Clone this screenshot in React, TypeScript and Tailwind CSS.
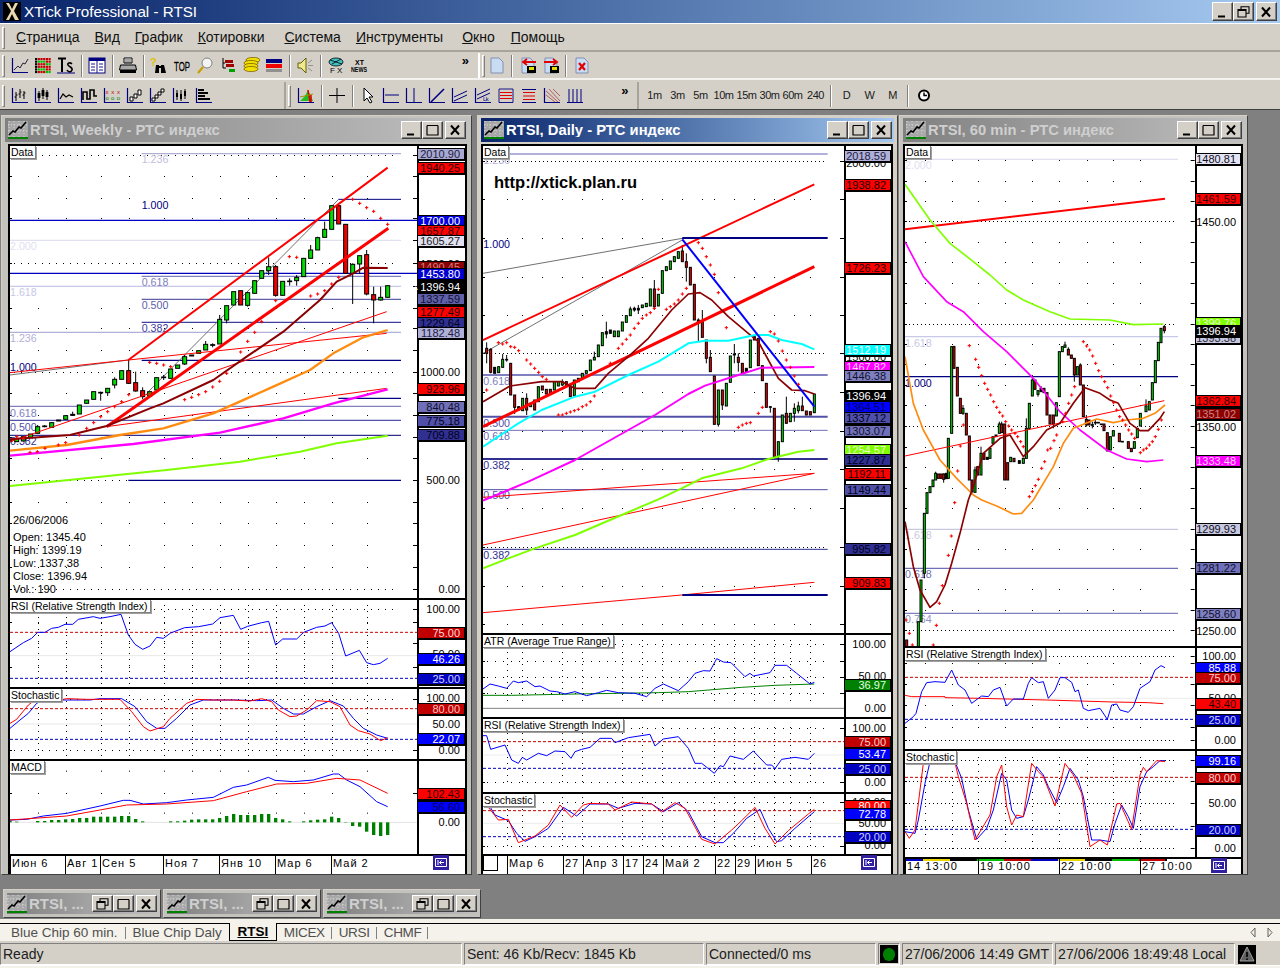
import React from "react";

type C = [number, number, number, string, number?, number?];
type T = [number, string, string?, string?];

const pts = (a: number[]) => {
  let s = "";
  for (let i = 0; i < a.length; i += 2) s += `${a[i]},${a[i + 1]} `;
  return s;
};
function L({ p, c, w = 3, d }: { p: number[]; c: string; w?: number; d?: string }) {
  return <polyline points={pts(p)} fill="none" stroke={c} strokeWidth={w} strokeDasharray={d} strokeLinejoin="round" />;
}
const COL: Record<string, string> = { g: "#00dc00", r: "#f00000", k: "#000000" };
function Candles({ d, w }: { d: C[]; w: number }) {
  return (
    <g>
      {d.map(([x, t, b, c, wt, wb], i) => (
        <g key={i}>
          <line x1={x} x2={x} y1={wt ?? t} y2={wb ?? b} stroke="#000" strokeWidth={3} />
          <rect x={x - w / 2} y={t} width={w} height={Math.max(b - t, 1)} fill={COL[c]} stroke="#000" strokeWidth={3} />
        </g>
      ))}
    </g>
  );
}
function Sar({ p }: { p: number[] }) {
  let s = "";
  for (let i = 0; i < p.length; i += 2) s += `M${p[i] - 5} ${p[i + 1]}h10M${p[i]} ${p[i + 1] - 5}v10`;
  return <path d={s} stroke="#ff0000" strokeWidth={3} fill="none" />;
}
const r3 = (v: number) => Math.round(v / 3) * 3;
function Grid({ xs, ys, dense = [], step = 21, x0, x1, colStep, y0, y1 }: { xs: number[]; ys: number[]; dense?: number[]; step?: number; x0: number; x1: number; colStep?: number; y0?: number; y1?: number }) {
  const out: React.ReactNode[] = [];
  const dot = (x: number, y: number, k: string) => <rect key={k} x={r3(x)} y={r3(y)} width={3} height={3} fill="#000" />;
  ys.forEach((y) => xs.forEach((x) => out.push(dot(x, y, `a${x}-${y}`))));
  dense.forEach((y) => {
    for (let x = x0 + 12; x < x1 - 60; x += step) out.push(dot(x, y, `b${x}-${y}`));
  });
  if (colStep && y0 !== undefined && y1 !== undefined)
    xs.forEach((x) => {
      for (let y = y0; y < y1; y += colStep) out.push(dot(x, y, `c${x}-${y}`));
    });
  [...ys, ...dense].forEach((y, i) => {
    out.push(<rect key={`t${i}`} x={x0} y={r3(y)} width={6} height={3} fill="#000" />);
    out.push(<rect key={`u${i}`} x={x1 - 12} y={r3(y)} width={12} height={3} fill="#000" />);
  });
  return <g>{out}</g>;
}
function Fib({ x, y, t, c }: { x: number; y: number; t: string; c: string }) {
  return (
    <text x={x} y={y} fill={c} fontSize={32}>
      {t}
    </text>
  );
}
function Pane({ cls, plotW, top, vx, vy, vw, vh, tags, over, children }: { cls: string; plotW: string; top: number; vx: number; vy: number; vw: number; vh: number; tags: T[]; over?: React.ReactNode; children: React.ReactNode }) {
  return (
    <div className={`flex shrink-0 box-content border-b-2 border-black ${cls}`}>
      <div className={`relative overflow-hidden shrink-0 ${plotW}`}>
        <svg viewBox={`${vx} ${vy} ${vw} ${vh}`} preserveAspectRatio="none" className="block w-full h-full">
          {children}
        </svg>
        {over}
      </div>
      <div className="relative flex-1 border-l-2 border-black">
        {tags.map(([y, t, bg, fg], i) =>
          bg ? (
            <div key={i} className="absolute left-[-2px] right-0 h-[13px] border border-black border-b-2 box-border flex items-center justify-end pr-[4px] text-[11px] leading-none" style={{ top: y - top - 6, background: bg, color: fg }}>
              {t[0] === "▲" ? <span className="text-[7px] mr-[1px]">▲</span> : null}
              {t[0] === "▲" ? t.slice(1) : t}
            </div>
          ) : (
            <div key={i} className="absolute right-[5px] h-[13px] flex items-center text-[11px] leading-none text-black" style={{ top: y - top - 6 }}>
              {t}
            </div>
          )
        )}
      </div>
    </div>
  );
}
function PaneTitle({ t }: { t: string }) {
  return <div className="absolute left-0 top-0 bg-white text-black text-[10.5px] leading-[12px] pl-[1px] pr-[2px] border border-t-0 border-l-0 border-[#808080] shadow-[1px_1px_0_#a0a0a0] whitespace-nowrap">{t}</div>;
}
function DateRow({ w, items, strip, blank, btn }: { w: string; items: [number, string][]; strip?: boolean; blank?: boolean; btn: string }) {
  return (
    <div className="flex flex-1 bg-white min-h-0">
      <div className={`relative shrink-0 overflow-hidden ${w} text-[11px] text-black tracking-[1px]`}>
        {strip && (
          <div className="flex h-[2px] w-[262px] bg-black">
            <div className="w-[18px] bg-[#0000c0]" />
            <div className="w-[27px] bg-[#e8d800]" />
            <div className="w-[27px] bg-black" />
            <div className="w-[27px] bg-[#00c000]" />
            <div className="w-[27px] bg-[#c00000]" />
            <div className="w-[27px] bg-[#0000c0]" />
            <div className="w-[27px] bg-[#e8d800]" />
            <div className="w-[27px] bg-black" />
            <div className="w-[27px] bg-[#00c000]" />
            <div className="w-[26px] bg-[#c00000]" />
          </div>
        )}
        {blank && <div className="absolute left-0 top-[-3px] w-[15px] h-[18px] border border-black bg-white" />}
        {items.map(([x, t], i) => (
          <div key={i} className="absolute top-0 bottom-0 border-l border-black pl-[1px] leading-[14px] whitespace-nowrap" style={{ left: x }}>
            {t}
          </div>
        ))}
      </div>
      <div className="flex-1 relative">
        <div className={`absolute top-[-1px] ${btn} w-[16px] h-[15px] bg-[#3020a0] flex items-center justify-center`}>
          <svg width="12" height="9" viewBox="0 0 12 9" fill="none" stroke="#fff">
            <path d="M.5.5h11v8H.5zM3 2v5M9 4.5H4.5M6.5 2.5l-2 2 2 2" />
          </svg>
        </div>
      </div>
    </div>
  );
}

function TitleIcon() {
  return (
    <svg width="20" height="18" viewBox="0 0 20 18" className="shrink-0">
      <rect width="20" height="18" fill="#a8a8a8" />
      <path d="M1 0v16M6 0v16M11 0v16M16 0v16M0 4h20M0 10h20" stroke="#d8d8d8" strokeWidth="1" strokeDasharray="1 2" />
      <path d="M1 14l4-4 2 1 4-5 2 1 5-6" stroke="#000" strokeWidth="1.6" fill="none" />
      <rect y="16" width="20" height="2" fill="#008000" />
    </svg>
  );
}
function WinBtn({ g, w = "w-[21px]", h = "h-[18px]" }: { g: "min" | "max" | "rest" | "close"; w?: string; h?: string }) {
  return (
    <div className={`${w} ${h} shrink-0 bg-[#d4d0c8] border border-[#404040] border-t-white border-l-white shadow-[inset_-1px_-1px_0_#808080] flex items-center justify-center`}>
      <svg width="13" height="12" viewBox="0 0 13 12" fill="none" stroke="#000">
        {g === "min" && <path d="M2 10.5h7" strokeWidth="2" />}
        {g === "max" && <path d="M1 1.5h11M1 1.5v9.5h11V1.5" strokeWidth="1.2" />}
        {g === "rest" && <path d="M4 3V.7h8v6.5h-3M1 3.5h8V11H1zM1 4.5h8" strokeWidth="1.1" />}
        {g === "close" && <path d="M2 1.5l8 9M10 1.5l-8 9" strokeWidth="2" />}
      </svg>
    </div>
  );
}
function MdiWin({ cls, frame, active, title, children }: { cls: string; frame: string; active?: boolean; title: string; children: React.ReactNode }) {
  return (
    <div className={`absolute flex flex-col border border-[#404040] border-t-[#d4d0c8] border-l-[#d4d0c8] px-[3px] pt-[2px] ${active ? "bg-[#d4d0c8]" : "bg-[#c4c2bc]"} ${cls}`}>
      <div className={`h-[24px] shrink-0 flex items-center pl-[3px] pr-[2px] ${active ? "bg-linear-to-r from-[#0a246a] to-[#a6caf0] text-white" : "bg-linear-to-r from-[#808080] to-[#c0c0c0] text-[#cfcfcf]"}`}>
        <TitleIcon />
        <div className="ml-[2px] flex-1 text-[14.75px] font-bold leading-none whitespace-nowrap overflow-hidden">{title}</div>
        <WinBtn g="min" />
        <WinBtn g="max" />
        <div className="w-[2px]" />
        <WinBtn g="close" />
      </div>
      <div className={`mt-[2px] flex-1 min-h-0 flex flex-col bg-white border-t-2 border-x-2 border-black ${frame}`}>{children}</div>
    </div>
  );
}
function Tile({ cls }: { cls: string }) {
  return (
    <div className={`absolute top-[779px] w-[158px] h-[29px] bg-[#c4c2bc] border border-[#404040] border-t-[#d4d0c8] border-l-[#d4d0c8] p-[3px] ${cls}`}>
      <div className="h-full flex items-center bg-linear-to-r from-[#808080] to-[#c0c0c0] text-[#cfcfcf]">
        <TitleIcon />
        <div className="ml-[2px] flex-1 text-[15px] font-bold leading-none whitespace-nowrap overflow-hidden">RTSI, ...</div>
        <WinBtn g="rest" h="h-[17px]" />
        <WinBtn g="max" h="h-[17px]" />
        <div className="w-[2px]" />
        <WinBtn g="close" h="h-[17px]" />
      </div>
    </div>
  );
}

/* ---------- Weekly ---------- */
const wkCandles: C[] = [
  [30, 900, 905, "r"], [50, 895, 905, "g"], [70, 890, 903, "g"], [92, 882, 892, "g"], [113, 860, 880, "g", 855, 880], [134, 858, 860, "k", 855, 862], [155, 848, 862, "g"], [176, 840, 843, "k"], [197, 827, 838, "g"], [218, 823, 826, "k", 815, 828], [238, 795, 822, "g"], [260, 780, 790, "g"], [281, 755, 778, "g", 755, 780], [302, 757, 759, "k", 755, 782], [323, 745, 758, "g", 745, 768], [344, 718, 735, "g", 712, 745], [365, 692, 718, "g"], [386, 692, 730, "r", 660, 732], [407, 728, 753, "r", 695, 755], [428, 752, 770, "r", 742, 778], [449, 755, 768, "g"], [470, 713, 750, "g"], [491, 711, 713, "k", 705, 720], [512, 687, 715, "g"], [533, 675, 685, "g"], [554, 650, 672, "g", 645, 675], [575, 645, 648, "g"], [596, 632, 640, "g"], [617, 613, 630, "g", 603, 630], [638, 614, 616, "k", 610, 622], [659, 538, 612, "g", 525, 612], [680, 497, 540, "g", 497, 550], [701, 455, 495, "g"], [722, 452, 495, "r"], [743, 458, 496, "g", 455, 500], [764, 422, 460, "g"], [785, 392, 415, "g"], [806, 380, 392, "g", 352, 405], [827, 380, 466, "r", 375, 470], [848, 424, 466, "g"], [869, 423, 425, "k", 415, 437], [890, 412, 422, "g", 405, 437], [911, 355, 410, "g"], [932, 330, 355, "g", 315, 355], [953, 293, 330, "g", 290, 330], [974, 268, 292, "g", 245, 292], [995, 197, 268, "g"], [1016, 197, 252, "r"], [1037, 253, 400, "r"], [1058, 373, 400, "g", 370, 492], [1079, 347, 372, "g", 347, 402], [1100, 344, 462, "r", 330, 466], [1121, 464, 480, "r", 440, 550], [1142, 472, 480, "g", 440, 482], [1163, 437, 472, "g"],
];
const wkXs = [113, 197, 302, 386, 491, 575, 659, 743, 827, 911, 995, 1100];
const wkSar = [50, 890, 70, 895, 90, 937, 112, 935, 135, 925, 175, 915, 197, 908, 238, 885, 260, 865, 281, 848, 302, 830, 323, 815, 344, 800, 365, 785, 386, 764, 449, 667, 470, 670, 491, 675, 512, 680, 554, 779, 575, 772, 596, 764, 617, 755, 638, 741, 659, 724, 680, 700, 722, 636, 743, 604, 764, 577, 785, 545, 827, 482, 868, 350, 890, 352, 932, 468, 953, 462, 974, 452, 995, 432, 1016, 412, 1058, 178, 1079, 190, 1100, 203, 1121, 214, 1142, 235, 1163, 253];

function Weekly() {
  const main: T[] = [
    [372, "1000.00"], [480, "500.00"], [589, "0.00"], [264, "1500.00"],
    [154, "2010.90", "#a8a8d0", "#202040"], [168, "1940.25", "#ff0000", "#200000"], [221, "1700.00", "#0000e0", "#ffffff"], [231, "1657.87", "#ff0000", "#300000"], [241, "1605.27", "#e0e0f0", "#202020"], [267, "1490.45", "#8b0000", "#d08080"], [274, "1453.80", "#0000d0", "#ffffff"], [287, "▲1396.94", "#000000", "#ffffff"], [299, "1337.59", "#6060a8", "#101030"], [312, "1277.49", "#ff0000", "#200000"], [323, "1229.64", "#303090", "#000020"], [333, "1182.48", "#b0b0d8", "#202040"], [389, "923.96", "#ff0000", "#200000"], [407, "840.48", "#7070b8", "#101030"], [421, "775.18", "#5050a8", "#000020"], [435, "709.88", "#303090", "#000020"],
  ];
  return (
    <MdiWin cls="left-[1px] top-[5px] w-[471px] h-[760px]" frame="ml-[3px] mr-[1px]" title="RTSI, Weekly - РТС индекс">
      <Pane cls="h-[452px]" plotW="w-[407px]" top={146} vx={30} vy={18} vw={1221} vh={1356} tags={main}
        over={
          <>
            <PaneTitle t="Data" />
            <div className="absolute left-[3px] top-[368px] text-[11px] text-black leading-[13px] whitespace-pre">{"26/06/2006\n"}<span className="block h-[4px]" />{"Open: 1345.40\nHigh: 1399.19\nLow: 1337.38\nClose: 1396.94\nVol.: 190"}</div>
          </>
        }>
        <Grid xs={wkXs} ys={[108, 175, 235, 300, 438, 505, 565, 630, 760, 825, 890, 955, 1087, 1150, 1215, 1282]} dense={[45, 370, 696, 1021, 1348]} x0={30} x1={1251} />
        <L p={[425, 41, 1203, 41]} c="#b0b0d0" w={4} />
        <L p={[1015, 178, 1203, 178]} c="#000080" />
        <L p={[30, 241, 1252, 241]} c="#0000c0" w={4} />
        <L p={[30, 301, 1203, 301]} c="#e0e0f0" w={4} />
        <L p={[30, 400, 1252, 400]} c="#0000c0" w={4} />
        <L p={[425, 409, 1203, 409]} c="#8080c0" w={4} />
        <L p={[30, 439, 1203, 439]} c="#c8c8e8" w={4} />
        <L p={[425, 478, 1203, 478]} c="#6060a8" w={4} />
        <L p={[425, 547, 1203, 547]} c="#4040a0" w={4} />
        <L p={[30, 577, 1203, 577]} c="#b0b0d8" w={4} />
        <L p={[425, 661, 1203, 661]} c="#000080" w={4} />
        <L p={[1015, 775, 1203, 775]} c="#000080" w={4} />
        <L p={[30, 799, 1203, 799]} c="#8080c0" w={4} />
        <L p={[30, 841, 1203, 841]} c="#5050a8" w={4} />
        <L p={[30, 886, 1203, 886]} c="#303090" w={4} />
        <L p={[385, 1021, 1203, 1021]} c="#000080" w={4} />
        <Fib x={425} y={70} t="1.236" c="#c0c0dc" />
        <Fib x={425} y={208} t="1.000" c="#000080" />
        <Fib x={425} y={438} t="0.618" c="#8080c0" />
        <Fib x={425} y={507} t="0.500" c="#6060a8" />
        <Fib x={425} y={576} t="0.382" c="#4040a0" />
        <Fib x={30} y={330} t="2.000" c="#e0e0f0" />
        <Fib x={30} y={468} t="1.618" c="#c8c8e8" />
        <Fib x={30} y={607} t="1.236" c="#b0b0d8" />
        <Fib x={30} y={692} t="1.000" c="#000080" />
        <Fib x={30} y={830} t="0.618" c="#8080c0" />
        <Fib x={30} y={872} t="0.500" c="#5050a8" />
        <Fib x={30} y={915} t="0.382" c="#303090" />
        <L p={[30, 705, 385, 660]} c="#707070" />
        <L p={[440, 760, 1016, 178]} c="#707070" />
        <Candles d={wkCandles} w={12} />
        <L p={[30, 698, 385, 660, 1160, 580]} c="#ff0000" />
        <L p={[30, 905, 1160, 515]} c="#ff0000" />
        <L p={[320, 860, 1160, 745]} c="#ff0000" />
        <L p={[385, 660, 1163, 83]} c="#ff0000" w={6} />
        <L p={[320, 860, 1165, 265]} c="#ff0000" w={9} />
        <L p={[30, 898, 210, 885, 320, 858, 450, 805, 490, 790, 640, 720, 740, 650, 850, 575, 960, 480, 1010, 425, 1060, 400, 1090, 383, 1163, 384]} c="#8b0000" w={6} />
        <L p={[30, 932, 200, 915, 360, 885, 490, 865, 640, 820, 820, 740, 930, 690, 1000, 640, 1090, 592, 1163, 570]} c="#ff8c10" w={7} />
        <L p={[30, 947, 400, 912, 660, 878, 850, 835, 1000, 790, 1163, 748]} c="#ff00ff" w={7} />
        <L p={[30, 1038, 500, 990, 720, 965, 900, 935, 1010, 910, 1163, 887]} c="#80ff00" w={6} />
        <Sar p={wkSar} />
      </Pane>
      <Pane cls="h-[87px]" plotW="w-[407px]" top={600} vx={30} vy={270} vw={1221} vh={261} over={<PaneTitle t="RSI (Relative Strength Index)" />}
        tags={[[609, "100.00"], [654, "50.00"], [633, "75.00", "#c00000", "#ffd8d8"], [659, "46.26", "#0000ff", "#ffffff"], [679, "25.00", "#0000c0", "#d0d0ff"]]}>
        <Grid xs={wkXs} ys={[335, 400, 470]} dense={[298]} x0={30} x1={1251} colStep={18} y0={285} y1={525} />
        <L p={[30, 437, 1252, 437]} c="#e8e8e8" />
        <L p={[30, 367, 1252, 367]} c="#d00000" d="9 6" />
        <L p={[30, 505, 1252, 505]} c="#0000c0" d="9 6" />
        <L p={[30, 425, 70, 398, 95, 385, 113, 367, 135, 367, 155, 355, 175, 352, 195, 343, 218, 343, 235, 328, 280, 320, 300, 325, 330, 320, 363, 313, 385, 375, 405, 403, 428, 418, 450, 408, 470, 382, 490, 385, 512, 369, 554, 353, 596, 350, 638, 342, 660, 323, 700, 316, 722, 358, 743, 349, 785, 338, 806, 334, 827, 405, 848, 387, 890, 387, 911, 367, 950, 352, 975, 348, 995, 338, 1016, 370, 1037, 438, 1078, 421, 1100, 458, 1120, 464, 1140, 460, 1163, 445]} c="#0000ff" />
      </Pane>
      <Pane cls="h-[70px]" plotW="w-[407px]" top={689} vx={30} vy={537} vw={1221} vh={210} over={<PaneTitle t="Stochastic" />}
        tags={[[698, "100.00"], [724, "50.00"], [750, "0.00"], [709, "80.00", "#c00000", "#ffc0c0"], [739, "22.07", "#0000ff", "#ffffff"]]}>
        <Grid xs={wkXs} ys={[]} dense={[566, 720]} x0={30} x1={1251} colStep={18} y0={555} y1={740} />
        <L p={[30, 642, 1252, 642]} c="#e8e8e8" />
        <L p={[30, 596, 1252, 596]} c="#d00000" d="9 6" />
        <L p={[30, 688, 1252, 688]} c="#0000c0" d="9 6" />
        <L p={[30, 655, 60, 630, 85, 610, 110, 580, 130, 570, 195, 570, 270, 570, 300, 566, 365, 566, 405, 590, 440, 635, 470, 655, 495, 655, 530, 625, 570, 585, 610, 570, 700, 570, 770, 572, 815, 570, 850, 595, 880, 612, 910, 612, 950, 590, 990, 572, 1030, 588, 1060, 625, 1090, 655, 1130, 675, 1163, 685]} c="#0000ff" />
        <L p={[30, 640, 50, 628, 85, 585, 110, 566, 135, 572, 180, 570, 200, 566, 260, 568, 300, 568, 360, 568, 395, 605, 430, 650, 450, 663, 490, 650, 510, 625, 560, 580, 590, 568, 640, 570, 700, 570, 750, 573, 785, 566, 815, 575, 835, 600, 870, 620, 890, 618, 920, 600, 950, 572, 990, 575, 1020, 590, 1050, 645, 1075, 662, 1110, 672, 1142, 692, 1163, 683]} c="#ff0000" />
      </Pane>
      <Pane cls="h-[93px]" plotW="w-[407px]" top={761} vx={30} vy={753} vw={1221} vh={279} over={<PaneTitle t="MACD" />}
        tags={[[822, "0.00"], [794, "102.43", "#ff0000", "#300000"], [807, "56.60", "#0000ff", "#000060"]]}>
        <Grid xs={wkXs} ys={[850]} dense={[]} x0={30} x1={1251} />
        {wkXs.map((x) => [782, 908].map((y) => <rect key={`${x}${y}`} x={r3(x)} y={y} width={3} height={3} fill="#000" />))}
        <L p={[30, 937, 1252, 937]} c="#e4e4e4" />
        {[[30, 932], [50, 935], [113, 933], [134, 933], [155, 930], [176, 930], [197, 928], [218, 927], [239, 924], [260, 924], [281, 920], [302, 920], [323, 920], [344, 920], [365, 918], [386, 918], [407, 927], [428, 934], [512, 934], [533, 934], [554, 932], [575, 929], [596, 928], [617, 928], [638, 928], [659, 924], [680, 918], [701, 912], [722, 915], [743, 915], [764, 915], [785, 912], [806, 912], [827, 924], [848, 928], [869, 934], [911, 934], [932, 931], [953, 929], [974, 928], [995, 920], [1016, 924], [1037, 936], [1058, 948], [1079, 950], [1100, 965], [1121, 975], [1142, 978], [1163, 975]].map(([x, y], i) => (
          <rect key={i} x={x - 5} y={Math.min(y, 937)} width={10} height={Math.abs(937 - y)} fill="#008000" />
        ))}
        <L p={[30, 930, 80, 928, 130, 918, 200, 910, 300, 888, 370, 871, 390, 871, 430, 882, 500, 878, 560, 870, 640, 862, 700, 832, 740, 825, 805, 802, 825, 811, 880, 815, 940, 810, 1000, 792, 1016, 792, 1040, 810, 1080, 830, 1130, 875, 1163, 890]} c="#0000ff" />
        <L p={[30, 930, 100, 925, 200, 918, 300, 900, 380, 885, 500, 882, 640, 872, 740, 845, 830, 822, 920, 820, 1010, 805, 1080, 810, 1163, 850]} c="#ff0000" />
      </Pane>
      <DateRow w="w-[407px]" btn="left-[16px]" items={[[0, "Июн 6"], [55, "Авг 1"], [90, "Сен 5"], [153, "Ноя 7"], [209, "Янв 10"], [265, "Мар 6"], [321, "Май 2"]]} />
    </MdiWin>
  );
}

/* ---------- Daily ---------- */
const dyCandles: C[] = [
  [35, 625, 640, "r", 607, 670], [47, 628, 697, "r", 625, 700], [59, 682, 700, "k"], [71, 680, 698, "g"], [83, 658, 682, "g", 642, 682], [95, 658, 660, "k", 645, 665], [107, 670, 765, "r"], [119, 765, 802, "r", 765, 822], [131, 800, 810, "k"], [143, 775, 812, "g"], [155, 775, 810, "r", 760, 825], [167, 790, 800, "g"], [179, 780, 810, "r"], [190, 740, 785, "g"], [202, 738, 750, "r"], [214, 748, 762, "r"], [226, 748, 762, "r"], [238, 725, 750, "g"], [250, 725, 738, "g"], [262, 725, 735, "g", 718, 738], [274, 725, 738, "r"], [286, 740, 770, "r"], [298, 720, 767, "g"], [310, 715, 725, "g"], [322, 700, 715, "g"], [334, 692, 700, "g"], [346, 660, 692, "g"], [358, 652, 660, "g", 635, 660], [370, 615, 650, "g"], [382, 578, 617, "g"], [394, 575, 582, "k", 545, 595], [406, 570, 580, "k"], [418, 573, 590, "g"], [430, 573, 590, "g"], [442, 546, 573, "g"], [454, 527, 547, "g"], [466, 507, 527, "g", 500, 527], [478, 505, 510, "k", 500, 515], [490, 505, 510, "k", 495, 522], [502, 495, 503, "g"], [514, 490, 500, "g"], [526, 447, 498, "g"], [538, 447, 500, "r", 420, 510], [550, 463, 498, "g"], [562, 392, 460, "g"], [574, 380, 392, "g"], [586, 363, 388, "g"], [598, 350, 365, "g"], [610, 335, 355, "g"], [622, 333, 365, "r", 315, 365], [634, 365, 382, "r", 340, 425], [646, 382, 435, "r"], [658, 433, 540, "r"], [670, 540, 548, "k", 535, 605], [682, 545, 592, "r", 510, 592], [694, 600, 655, "r", 600, 670], [706, 652, 695, "r", 630, 695], [718, 708, 853, "r"], [730, 750, 853, "g", 750, 860], [742, 750, 795, "r", 750, 810], [754, 730, 798, "g"], [766, 648, 727, "g"], [778, 642, 645, "k", 612, 670], [790, 652, 667, "r", 640, 695], [802, 670, 700, "r"], [814, 685, 697, "k"], [826, 600, 683, "g"], [838, 590, 600, "k"], [850, 595, 677, "r"], [862, 677, 722, "r"], [874, 730, 802, "r"], [886, 800, 802, "k", 800, 818], [898, 805, 950, "r"], [910, 905, 950, "g", 905, 965], [922, 825, 905, "g"], [934, 820, 850, "r", 770, 850], [946, 820, 845, "g"], [958, 805, 820, "g", 790, 845], [970, 798, 812, "g", 785, 820], [982, 798, 812, "r", 770, 812], [994, 813, 825, "r"], [1006, 815, 825, "r"], [1018, 762, 818, "g"],
];
const dyCols = [95, 142, 202, 262, 322, 382, 442, 502, 562, 622, 682, 718, 778, 838, 898, 958, 1006];
const dyOsc = [95, 142, 262, 322, 442, 502, 562, 718, 778, 838, 898, 946, 1006];
const dySar = [35, 750, 70, 608, 83, 612, 95, 608, 107, 620, 119, 622, 131, 632, 155, 660, 167, 672, 179, 685, 191, 697, 202, 710, 214, 718, 250, 825, 262, 825, 274, 820, 286, 816, 298, 812, 310, 808, 322, 800, 334, 795, 346, 785, 358, 768, 406, 670, 430, 625, 442, 612, 454, 598, 466, 585, 478, 565, 490, 550, 502, 535, 514, 525, 526, 518, 538, 505, 550, 448, 574, 508, 586, 500, 598, 492, 610, 480, 622, 462, 634, 445, 670, 308, 682, 325, 694, 350, 706, 375, 718, 403, 730, 458, 754, 563, 790, 862, 802, 855, 814, 850, 826, 848, 850, 820, 862, 802, 886, 575, 898, 582, 910, 603, 922, 633, 934, 660, 946, 682, 958, 708, 970, 733];

function Daily() {
  const main: T[] = [
    [163, "2000.00"], [357, "1500.00"],
    [156, "2018.59", "#b0b0d8", "#202040"], [185, "1938.82", "#ff0000", "#200000"], [268, "1726.23", "#ff0000", "#200000"], [350, "1512.19", "#00ffff", "#ffffff"], [367, "1467.82", "#ff00ff", "#ffd0ff"], [376, "1446.38", "#8080c0", "#101030"], [396, "▲1396.94", "#000000", "#ffffff"], [407, "1364.51", "#0000ff", "#000060"], [418, "1337.12", "#5050a8", "#000020"], [431, "1303.07", "#7070b8", "#101030"], [450, "1254.57", "#80ff00", "#e8ffd0"], [460, "1227.87", "#303090", "#000020"], [474, "1192.11", "#ff0000", "#200000"], [490, "1149.44", "#5050a8", "#000020"], [549, "995.82", "#303090", "#000020"], [583, "909.83", "#ff0000", "#200000"],
  ];
  return (
    <MdiWin active cls="left-[477px] top-[5px] w-[421px] h-[760px]" frame="ml-0 mr-[1px]" title="RTSI, Daily - РТС индекс">
      <Pane cls="h-[487px]" plotW="w-[361px]" top={146} vx={24} vy={18} vw={1083} vh={1461} tags={main}
        over={
          <>
            <PaneTitle t="Data" />
            <div className="absolute left-[11px] top-[26px] text-[16.5px] font-bold leading-[20px] text-black whitespace-nowrap">http://xtick.plan.ru</div>
          </>
        }>
        <Grid xs={dyCols} ys={[178, 295, 410, 525, 757, 872, 987, 1103, 1337, 1452]} dense={[63, 640, 1222]} step={12} x0={24} x1={1107} />
        <L p={[24, 42, 1058, 42]} c="#b0b0d8" w={6} />
        <L p={[24, 705, 1058, 705]} c="#8080c0" w={6} />
        <L p={[24, 830, 1058, 830]} c="#5050a8" w={6} />
        <L p={[24, 871, 1058, 871]} c="#7070b8" />
        <L p={[24, 957, 1058, 957]} c="#303090" w={6} />
        <L p={[24, 1049, 1058, 1049]} c="#5050a8" />
        <L p={[24, 1228, 1058, 1228]} c="#303090" />
        <Fib x={25} y={72} t="1.236" c="#b0b0d8" />
        <Fib x={25} y={325} t="1.000" c="#000080" />
        <Fib x={25} y={735} t="0.618" c="#8080c0" />
        <Fib x={25} y={862} t="0.500" c="#5050a8" />
        <Fib x={25} y={900} t="0.618" c="#7070b8" />
        <Fib x={25} y={988} t="0.382" c="#303090" />
        <Fib x={25} y={1078} t="0.500" c="#5050a8" />
        <Fib x={25} y={1258} t="0.382" c="#303090" />
        <L p={[24, 400, 622, 295]} c="#707070" />
        <L p={[24, 640, 622, 300]} c="#707070" />
        <Candles d={dyCandles} w={6} />
        <L p={[24, 1072, 1018, 1000]} c="#ff0000" />
        <L p={[24, 1215, 1018, 1000]} c="#ff0000" />
        <L p={[24, 1418, 620, 1365, 1018, 1327]} c="#ff0000" />
        <L p={[24, 600, 1018, 133]} c="#ff0000" w={6} />
        <L p={[24, 860, 1018, 380]} c="#ff0000" w={9} />
        <L p={[622, 294, 1058, 294]} c="#000080" w={6} />
        <L p={[622, 1365, 1058, 1365]} c="#000080" w={6} />
        <L p={[24, 785, 105, 738, 200, 725, 260, 725, 300, 745, 360, 745, 400, 700, 460, 650, 520, 595, 590, 510, 640, 462, 675, 458, 710, 480, 760, 530, 820, 580, 850, 605, 880, 660, 910, 715, 950, 750, 990, 752, 1018, 762]} c="#8b0000" w={5} />
        <L p={[24, 920, 130, 850, 200, 810, 300, 770, 360, 755, 460, 705, 550, 665, 640, 610, 690, 602, 760, 602, 840, 585, 880, 585, 920, 600, 980, 612, 1018, 628]} c="#00ffff" w={6} />
        <L p={[24, 1082, 160, 1025, 300, 960, 460, 870, 540, 825, 640, 762, 690, 737, 790, 705, 860, 683, 1018, 681]} c="#ff00ff" w={6} />
        <L p={[24, 1285, 100, 1255, 180, 1225, 300, 1185, 440, 1125, 550, 1078, 620, 1045, 680, 1015, 800, 985, 880, 957, 970, 935, 1018, 930]} c="#80ff00" w={6} />
        <L p={[622, 298, 1018, 800]} c="#0000ff" w={6} />
        <Sar p={dySar} />
      </Pane>
      <Pane cls="h-[82px]" plotW="w-[361px]" top={635} vx={24} vy={405} vw={1083} vh={246} over={<PaneTitle t="ATR (Average True Range)" />}
        tags={[[644, "100.00"], [676, "50.00"], [708, "0.00"], [685, "36.97", "#008000", "#e0ffe0"]]}>
        <Grid xs={dyOsc} ys={[]} dense={[433, 482, 530, 578]} step={24} x0={24} x1={1107} colStep={18} y0={420} y1={615} />
        <L p={[24, 625, 1107, 625]} c="#808080" />
        <L p={[24, 586, 110, 586, 300, 582, 550, 578, 640, 575, 800, 562, 900, 556, 1018, 552]} c="#008000" />
        <L p={[24, 567, 45, 552, 70, 558, 95, 565, 115, 543, 130, 548, 155, 543, 180, 560, 195, 558, 225, 573, 245, 575, 270, 582, 300, 575, 335, 587, 370, 578, 395, 571, 430, 578, 480, 580, 515, 590, 540, 565, 565, 552, 610, 572, 640, 545, 660, 520, 685, 512, 705, 513, 725, 476, 745, 486, 768, 488, 810, 530, 825, 520, 835, 528, 885, 518, 900, 496, 935, 496, 965, 520, 1005, 552, 1018, 547]} c="#0000ff" />
      </Pane>
      <Pane cls="h-[73px]" plotW="w-[361px]" top={719} vx={24} vy={657} vw={1083} vh={219} over={<PaneTitle t="RSI (Relative Strength Index)" />}
        tags={[[728, "100.00"], [782, "0.00"], [742, "75.00", "#c00000", "#ffd0d0"], [754, "53.47", "#0000ff", "#ffffff"], [769, "25.00", "#0000c0", "#d0d0ff"]]}>
        <Grid xs={dyOsc} ys={[]} dense={[685, 847]} step={24} x0={24} x1={1107} colStep={18} y0={680} y1={860} />
        <L p={[24, 765, 1107, 765]} c="#ececec" />
        <L p={[24, 725, 1107, 725]} c="#c00000" d="9 6" />
        <L p={[24, 805, 1107, 805]} c="#0000c0" d="9 6" />
        <L p={[24, 707, 35, 707, 47, 748, 90, 735, 110, 780, 130, 790, 142, 772, 155, 780, 190, 760, 215, 767, 240, 753, 270, 755, 288, 775, 300, 755, 320, 748, 345, 742, 375, 715, 410, 715, 420, 728, 460, 713, 525, 703, 540, 738, 565, 717, 610, 710, 640, 745, 660, 790, 680, 790, 718, 820, 735, 797, 745, 800, 765, 768, 805, 778, 835, 753, 875, 795, 890, 795, 900, 806, 920, 778, 960, 772, 1000, 778, 1018, 760]} c="#0000ff" />
      </Pane>
      <Pane cls="h-[60px]" plotW="w-[361px]" top={794} vx={24} vy={882} vw={1083} vh={180} over={<PaneTitle t="Stochastic" />}
        tags={[[802, "100.00"], [823, "50.00"], [845, "0.00"], [806, "80.00", "#ff0000", "#ffffff"], [814, "72.78", "#0000ff", "#ffffff"], [837, "20.00", "#0000c0", "#d0d0ff"]]}>
        <Grid xs={dyOsc} ys={[]} dense={[906, 1037]} step={24} x0={24} x1={1107} colStep={18} y0={890} y1={1050} />
        <L p={[24, 970, 1107, 970]} c="#ececec" />
        <L p={[24, 932, 1107, 932]} c="#c00000" d="9 6" />
        <L p={[24, 1010, 1107, 1010]} c="#0000c0" d="9 6" />
        <L p={[24, 912, 40, 912, 60, 945, 100, 962, 125, 1000, 150, 1024, 180, 1010, 220, 985, 265, 922, 305, 948, 345, 912, 400, 912, 430, 925, 480, 910, 530, 912, 565, 935, 610, 908, 640, 935, 680, 1010, 720, 1028, 745, 1028, 775, 1000, 815, 955, 855, 928, 880, 985, 905, 1025, 920, 1022, 960, 985, 1018, 935]} c="#0000ff" />
        <L p={[24, 912, 35, 915, 70, 960, 100, 958, 130, 1028, 180, 1008, 220, 975, 255, 915, 290, 952, 325, 915, 345, 910, 400, 912, 420, 930, 470, 906, 530, 912, 560, 936, 600, 908, 630, 925, 680, 1018, 720, 1032, 770, 990, 800, 962, 840, 922, 870, 985, 900, 1032, 940, 992, 1000, 942, 1018, 928]} c="#ff0000" />
      </Pane>
      <DateRow w="w-[361px]" blank btn="left-[17px]" items={[[24, "Мар 6"], [80, "27"], [100, "Апр 3"], [140, "17"], [160, "24"], [180, "Май 2"], [232, "22"], [252, "29"], [272, "Июн 5"], [328, "26"]]} />
    </MdiWin>
  );
}

/* ---------- Hourly ---------- */
const hrCandles: C[] = [
  [20, 1560, 1590, "r"], [55, 1505, 1590, "g"], [63, 1380, 1505, "g"], [73, 1180, 1360, "g", 1180, 1375], [81, 1118, 1180, "g"], [90, 1100, 1118, "g"], [99, 1080, 1100, "g"], [107, 1060, 1080, "g", 1055, 1080], [115, 1062, 1075, "r"], [123, 1062, 1075, "r"], [131, 1062, 1078, "r", 1060, 1088], [139, 1060, 1076, "k"], [145, 955, 1075, "g"], [155, 680, 940, "g"], [162, 680, 745, "r", 677, 745], [172, 742, 828, "r"], [181, 835, 880, "r"], [189, 865, 880, "g", 855, 885], [199, 880, 945, "r"], [208, 948, 1080, "r"], [216, 1080, 1115, "r", 1080, 1125], [225, 1050, 1117, "g", 1040, 1117], [233, 1040, 1065, "r"], [243, 1000, 1065, "g", 980, 1065], [252, 1000, 1018, "r"], [262, 1012, 1018, "k"], [270, 985, 1015, "g"], [279, 950, 970, "g"], [288, 945, 950, "k"], [298, 912, 940, "g", 905, 940], [305, 912, 938, "r", 905, 938], [314, 912, 1080, "r"], [323, 1028, 1080, "r"], [332, 1012, 1025, "g"], [342, 1015, 1025, "r"], [358, 1022, 1030, "k"], [370, 1015, 1030, "g"], [379, 925, 1015, "g", 895, 1015], [388, 850, 925, "g"], [397, 780, 828, "g", 765, 828], [405, 780, 808, "r"], [414, 812, 823, "g", 810, 830], [423, 805, 815, "k", 798, 815], [432, 805, 818, "r"], [441, 818, 885, "r"], [450, 885, 912, "r"], [460, 885, 912, "r", 885, 925], [469, 848, 888, "g"], [478, 695, 830, "g"], [487, 680, 695, "g"], [495, 675, 682, "g", 665, 682], [505, 688, 705, "r", 682, 705], [514, 705, 715, "r"], [523, 715, 765, "r", 715, 785], [532, 740, 765, "g"], [541, 735, 795, "r", 730, 795], [550, 795, 890, "r"], [559, 898, 915, "r", 885, 920], [567, 900, 915, "r"], [577, 914, 916, "k", 905, 925], [586, 907, 909, "k", 900, 915], [595, 907, 909, "k"], [604, 912, 914, "r"], [612, 912, 932, "r"], [622, 938, 993, "r"], [631, 950, 990, "g"], [640, 932, 948, "g"], [658, 940, 965, "r"], [667, 964, 966, "k"], [685, 965, 985, "r"], [694, 985, 995, "r"], [703, 965, 985, "g"], [712, 925, 953, "g"], [721, 880, 918, "g"], [738, 858, 875, "g", 838, 875], [748, 845, 870, "g"], [757, 788, 840, "g"], [766, 722, 788, "g"], [775, 667, 722, "g"], [783, 625, 668, "g"], [793, 620, 632, "r", 615, 640],
];
const hrCols = [75, 155, 235, 315, 397, 478, 560, 640, 720];
const hrSar = [208, 677, 227, 718, 236, 742, 245, 767, 254, 790, 263, 808, 272, 825, 281, 845, 290, 862, 299, 877, 308, 888, 317, 905, 326, 918, 335, 930, 345, 940, 353, 950, 362, 965, 370, 980, 173, 1053, 190, 915, 181, 978, 164, 1148, 388, 1130, 397, 1115, 406, 1097, 415, 1078, 425, 1045, 434, 1025, 443, 990, 452, 985, 462, 962, 470, 945, 488, 905, 497, 880, 506, 850, 515, 825, 524, 800, 550, 665, 560, 678, 569, 690, 578, 708, 587, 730, 596, 752, 605, 770, 614, 785, 623, 803, 632, 828, 641, 848, 650, 870, 659, 890, 668, 900, 677, 915, 686, 930, 695, 942, 704, 955, 721, 998, 730, 990, 739, 985, 748, 975, 757, 965, 766, 950, 775, 928, 784, 900, 154, 1248, 145, 1306, 127, 1397, 118, 1450, 109, 1516, 28, 1540, 18, 1500, 37, 1575, 100, 1575];

function Hourly() {
  const main: T[] = [
    [222, "1450.00"], [427, "1350.00"], [631, "1250.00"],
    [159, "1480.81", "#e4e4f4", "#101020"], [199, "1461.59", "#ff0000", "#300000"], [323, "1399.76", "#80ff00", "#e8ffd0"], [338, "1393.38", "#c8c8e0", "#303040"], [331, "▲1396.94", "#000000", "#ffffff"], [409, "1355.72", "#ff8c10", "#ffd090"], [414, "1351.02", "#8b0000", "#d08080"], [401, "1362.84", "#ff0000", "#300000"], [461, "1333.48", "#ff00ff", "#ffd0ff"], [529, "1299.93", "#c8c8e0", "#101020"], [568, "1281.22", "#7070b8", "#101030"], [614, "1258.60", "#8080c0", "#101030"],
  ];
  return (
    <MdiWin cls="left-[899px] top-[5px] w-[349px] h-[760px]" frame="ml-0 mr-[1px]" title="RTSI, 60 min - РТС индекс">
      <Pane cls="h-[500px]" plotW="w-[290px]" top={146} vx={15} vy={78} vw={870} vh={1500} tags={main} over={<PaneTitle t="Data" />}>
        <Grid xs={hrCols} ys={[120, 182, 243, 365, 427, 490, 550, 672, 733, 795, 855, 980, 1042, 1103, 1165, 1288, 1345, 1407, 1470]} dense={[303, 612, 918, 1228, 1530]} step={12} x0={15} x1={884} />
        <L p={[15, 118, 834, 118]} c="#e0e0f0" w={4} />
        <L p={[15, 650, 834, 650]} c="#c8c8e8" w={4} />
        <L p={[15, 770, 834, 770]} c="#000080" w={4} />
        <L p={[15, 1228, 834, 1228]} c="#c8c8e0" w={4} />
        <L p={[15, 1345, 834, 1345]} c="#7070b8" w={4} />
        <L p={[15, 1480, 834, 1480]} c="#8080c0" w={4} />
        <Fib x={15} y={148} t="2.000" c="#e0e0f0" />
        <Fib x={15} y={680} t="1.618" c="#c8c8e8" />
        <Fib x={15} y={800} t="1.000" c="#000080" />
        <Fib x={15} y={1258} t="1.618" c="#c8c8e0" />
        <Fib x={15} y={1375} t="0.618" c="#7070b8" />
        <Fib x={15} y={1510} t="0.764" c="#9090c8" />
        <Candles d={hrCandles} w={6} />
        <L p={[15, 1008, 793, 842]} c="#ff0000" />
        <L p={[15, 328, 795, 236]} c="#ff0000" w={6} />
        <L p={[15, 193, 90, 300, 150, 370, 220, 425, 270, 465, 320, 510, 370, 540, 450, 575, 510, 597, 630, 600, 700, 614, 790, 612]} c="#80ff00" w={5} />
        <L p={[15, 365, 70, 470, 140, 545, 190, 575, 250, 635, 320, 695, 400, 775, 480, 875, 540, 930, 620, 990, 680, 1017, 740, 1025, 790, 1020]} c="#ff00ff" w={5} />
        <L p={[15, 710, 40, 850, 70, 930, 120, 1020, 170, 1075, 220, 1125, 245, 1140, 290, 1158, 340, 1182, 365, 1180, 400, 1140, 460, 1040, 490, 970, 520, 925, 590, 897, 640, 908, 680, 900, 730, 895, 765, 880, 795, 855]} c="#ff8c10" w={5} />
        <L p={[15, 1205, 40, 1340, 60, 1410, 90, 1462, 110, 1445, 135, 1395, 155, 1330, 180, 1240, 205, 1140, 220, 1100, 250, 1000, 300, 955, 330, 945, 370, 1010, 400, 980, 440, 930, 480, 910, 520, 850, 555, 803, 600, 820, 630, 840, 655, 850, 690, 910, 720, 932, 745, 932, 780, 895, 793, 875]} c="#8b0000" w={5} />
        <Sar p={hrSar} />
      </Pane>
      <Pane cls="h-[101px]" plotW="w-[290px]" top={648} vx={15} vy={444} vw={870} vh={303} over={<PaneTitle t="RSI (Relative Strength Index)" />}
        tags={[[656, "100.00"], [698, "50.00"], [740, "0.00"], [668, "85.88", "#0000ff", "#ffffff"], [678, "75.00", "#c00000", "#ffd0d0"], [704, "43.40", "#ff0000", "#300000"], [720, "25.00", "#0000c0", "#d0d0ff"]]}>
        <Grid xs={hrCols} ys={[490, 552, 615, 680]} dense={[468, 720]} step={12} x0={15} x1={884} />
        <L p={[15, 595, 884, 595]} c="#ececec" />
        <L p={[15, 532, 884, 532]} c="#c00000" d="9 6" />
        <L p={[15, 658, 884, 658]} c="#0000c0" d="9 6" />
        <L p={[15, 586, 35, 590, 135, 590, 135, 593, 240, 595, 440, 600, 640, 606, 745, 608, 790, 611]} c="#ff0000" />
        <L p={[15, 670, 40, 650, 48, 640, 65, 575, 80, 548, 105, 545, 135, 547, 155, 510, 175, 555, 195, 570, 215, 610, 235, 595, 245, 588, 265, 590, 280, 570, 300, 562, 320, 618, 340, 597, 370, 597, 385, 550, 395, 533, 415, 548, 430, 545, 445, 595, 465, 570, 480, 533, 495, 533, 515, 547, 525, 575, 535, 570, 550, 625, 565, 632, 600, 625, 622, 658, 635, 615, 650, 612, 660, 630, 685, 637, 700, 620, 720, 565, 750, 545, 765, 510, 783, 497, 795, 503]} c="#0000ff" />
      </Pane>
      <Pane cls="h-[106px]" plotW="w-[290px]" top={751} vx={15} vy={753} vw={870} vh={318} over={<PaneTitle t="Stochastic" />}
        tags={[[803, "50.00"], [848, "0.00"], [761, "99.16", "#0000ff", "#ffffff"], [778, "80.00", "#c00000", "#ffd0d0"], [830, "20.00", "#0000c0", "#d0d0ff"]]}>
        <Grid xs={hrCols} ys={[]} dense={[780, 843, 910, 977, 1043]} step={12} x0={15} x1={884} colStep={21} y0={770} y1={1060} />
        <L p={[15, 832, 884, 832]} c="#c00000" d="9 6" />
        <L p={[15, 988, 884, 988]} c="#0000c0" d="9 6" />
        <L p={[15, 995, 45, 1000, 55, 960, 75, 850, 90, 785, 165, 785, 185, 835, 205, 930, 230, 1018, 260, 985, 280, 930, 305, 820, 320, 840, 335, 930, 350, 955, 370, 950, 385, 900, 410, 800, 430, 825, 445, 860, 470, 908, 490, 860, 510, 805, 535, 840, 550, 890, 575, 1020, 600, 1020, 630, 1025, 645, 970, 665, 915, 685, 950, 700, 985, 720, 860, 740, 815, 760, 800, 780, 782, 795, 782]} c="#0000ff" />
        <L p={[15, 995, 28, 1015, 45, 990, 70, 790, 75, 785, 165, 788, 175, 830, 200, 910, 225, 1020, 270, 945, 290, 830, 305, 795, 320, 920, 335, 975, 350, 945, 370, 950, 395, 790, 415, 815, 430, 830, 465, 918, 495, 790, 520, 825, 545, 880, 570, 1040, 600, 1020, 622, 1035, 650, 912, 660, 910, 695, 988, 720, 825, 730, 802, 740, 815, 770, 782, 795, 785]} c="#ff0000" />
      </Pane>
      <DateRow w="w-[290px]" strip btn="left-[16px]" items={[[0, "14 13:00"], [73, "19 10:00"], [154, "22 10:00"], [235, "27 10:00"]]} />
    </MdiWin>
  );
}

/* ---------- Toolbar ---------- */
const Axes = () => <path d="M1.5 1v14.5H17" stroke="#000080" strokeWidth="1.2" fill="none" />;
function Ic({ children }: { children?: React.ReactNode }) {
  return (
    <div className="w-[23px] h-[22px] shrink-0 flex items-center justify-center">
      <svg width="18" height="17" viewBox="0 0 18 17" fill="none">
        {children}
      </svg>
    </div>
  );
}
function Tx({ t }: { t: string }) {
  return <div className="w-[23px] shrink-0 text-center text-[#202020] whitespace-nowrap">{t}</div>;
}
const Sep = () => (
  <div className="w-[8px] shrink-0 flex justify-center">
    <div className="w-[2px] h-[22px] border-l border-r border-l-[#808080] border-r-white" />
  </div>
);
const Grip = () => <div className="w-[3px] h-[22px] shrink-0 border border-white border-r-[#808080] border-b-[#808080]" />;
const More = () => <div className="ml-auto mr-[9px] text-[13px] font-bold leading-none text-black mb-[10px]">»</div>;
const grid3 = () => {
  const out: React.ReactNode[] = [];
  const cols = ["#c00000", "#00c000", "#c00000", "#000000"];
  for (let r = 0; r < 6; r++) for (let c = 0; c < 6; c++) out.push(<rect key={`${r}${c}`} x={1 + c * 2.7} y={1 + r * 2.6} width={2.2} height={2.1} fill={c === 0 ? "#000" : cols[(r + (c > 3 ? 1 : 0) * 2) % 3]} />);
  return out;
};
const icons1 = [
  <><Axes /><path d="M3 13l4-4 2 2 3-5 2 1 3-5" stroke="#202040" strokeWidth="1" /></>,
  <>{grid3()}</>,
  <><path d="M1 1.5h8M5 1.5V15" stroke="#000" strokeWidth="2" /><path d="M15 7c-2-2-5-1-4 1s5 2 4 5-4 2-5 0" stroke="#000" strokeWidth="1.6" /><path d="M0 16h18" stroke="#000080" /></>,
  <><rect x="1" y="1" width="16" height="15" fill="#fff" stroke="#000080" /><rect x="1" y="1" width="16" height="3" fill="#000080" /><path d="M9 4v12M3 7h4M3 10h4M3 13h4M11 7h4M11 10h4M11 13h4" stroke="#000080" strokeWidth=".9" /></>,
  <><path d="M5 1h8v5H5z" fill="#fff" stroke="#000" /><path d="M1.5 8h15l1 5H.5z" fill="#a8a8a8" stroke="#000" /><rect x="1" y="13" width="16" height="3" fill="#000" /><path d="M6 3h6M6 5h6" stroke="#000" strokeWidth=".7" /></>,
  <><text x="0" y="9" fontSize="11" fontWeight="700" fill="#e0c000">?</text><path d="M6 8h3v8H5zM11 8h3l2 8h-5z" fill="#000" /><path d="M9 10h2" stroke="#000" strokeWidth="2" /></>,
  <text x="1" y="14" fontSize="13" fill="#000" stroke="#000" strokeWidth=".3" textLength="16" lengthAdjust="spacingAndGlyphs">TOP</text>,
  <><circle cx="11" cy="6" r="5" fill="#f4f4f4" stroke="#808080" /><path d="M7 10l-5 6" stroke="#c8a000" strokeWidth="2.2" /></>,
  <><path d="M4 1v10h3M4 6h2" stroke="#000" /><rect x="6" y="3" width="8" height="3" fill="#a00000" /><rect x="7" y="7" width="8" height="3" fill="#a00000" /><rect x="10" y="12" width="6" height="3" fill="#00a000" /></>,
  <>{[3, 6, 9, 12].map((y) => <ellipse key={y} cx={y === 3 ? 11 : 9} cy={y} rx="7" ry="2.6" fill="#f0e000" stroke="#806000" strokeWidth=".8" />)}</>,
  <><rect x="1" y="2" width="16" height="4" fill="#000080" /><rect x="1" y="7" width="16" height="4" fill="#f00000" /><rect x="1" y="12" width="16" height="3" fill="#909090" /></>,
  <><path d="M2 6h3l5-5v15l-5-5H2z" fill="#f0e890" stroke="#606000" /><path d="M12 6l4-3M12 8.5h5M12 11l4 3" stroke="#909090" /></>,
  <><ellipse cx="9" cy="5" rx="7" ry="4" fill="#40c0c0" stroke="#000" strokeWidth=".8" /><path d="M3 3l12 4M5 7l9-5" stroke="#000" strokeWidth=".8" /><text x="3" y="16" fontSize="8" fill="#000" letterSpacing="2">FX</text></>,
  <><text x="5" y="8" fontSize="7" fill="#000" fontWeight="700">XT</text><text x="1" y="15" fontSize="6.5" fill="#000" fontWeight="700" textLength="16" lengthAdjust="spacingAndGlyphs">NEWS</text></>,
];
const Doc = ({ c = "#c8dcf4" }: { c?: string }) => <path d="M3 1h8l4 4v11H3z" fill={c} stroke="#8090b0" />;
const Disk = () => <><rect x="8" y="9" width="9" height="7" fill="#000" /><rect x="10" y="10" width="5" height="3" fill="#e0e000" /></>;
const bars = (a: number[][], w = 1.8) => a.map(([x, t, b, wt, wb], i) => (
  <g key={i}>
    <path d={`M${x} ${wt ?? t}V${wb ?? b}`} stroke="#000" />
    <rect x={x - w / 2 - 0.5} y={t} width={w + 1} height={b - t} fill="#000" />
  </g>
));
const icons2 = [
  <><Axes /><path d="M5 5v9M9 2v9M13 4v8M3.5 10H5M5 8h1.5M7.5 7H9M9 5h1.5M11.5 8H13M13 6h1.5" stroke="#000" /></>,
  <><Axes />{bars([[5, 6, 11, 4, 14], [9, 3, 9, 1, 12], [13, 5, 10, 3, 13]])}</>,
  <><Axes /><path d="M3 12l3-5 3 3 3-2 4 2" stroke="#000" strokeWidth="1.2" /></>,
  <><Axes /><path d="M3 13V5h4v7h3V3h4v6h3" stroke="#000" strokeWidth="1.6" /></>,
  <><Axes /><text x="2.5" y="7" fontSize="6" fill="#c00000" textLength="14">xxx</text><text x="2.5" y="13" fontSize="6" fill="#008000" textLength="14">ooo</text></>,
  <><Axes /><path d="M4 10h3v4H4zM8 7h3v4H8zM12 3h3v5h-3z" stroke="#000" fill="#fff" /></>,
  <><Axes /><path d="M3 11h3v3H3zM6 8h3v3H6zM9 5h3v3H9zM12 2h3v3h-3z" stroke="#000" fill="#fff" /></>,
  <><Axes />{bars([[5, 6, 10, 3, 13], [9, 7, 12, 3, 14], [13, 4, 9, 2, 12]], 1)}</>,
  <><Axes /><path d="M3 3h6M3 6h10M3 9h7M3 12h12" stroke="#000" strokeWidth="1.8" /></>,
];
const lineTools = [
  <><Axes /><path d="M3 8h14" stroke="#000080" /></>,
  <><Axes /><path d="M9 1v14" stroke="#000080" /></>,
  <><Axes /><path d="M3 15L16 2" stroke="#000080" strokeWidth="1.6" /></>,
  <><Axes /><path d="M3 10l13-6M3 14l13-6" stroke="#000080" /></>,
  <><Axes /><path d="M3 8l13-6M3 12l13-6" stroke="#000080" /><text x="9" y="14" fontSize="6" fill="#000080">Lk</text></>,
  <><path d="M2 15.5h14M2 2v13.5M16 2v13.5M2 2h14" stroke="#000080" strokeWidth=".9" /><path d="M3 5.5h12M3 8.5h12M3 11.5h12" stroke="#e00000" /></>,
  <><path d="M2 2.5h14M2 15.5h14" stroke="#000080" /><path d="M3 5.5h12M3 9h12M3 12.5h12" stroke="#e00000" /></>,
  <><Axes /><path d="M3 4l12 11M3 8l9 7M6 2l11 12M10 2l7 7" stroke="#b06060" /></>,
  <><path d="M3 2v13M7 2v13M11 2v13M15 2v13M1 15.5h16" stroke="#000080" /></>,
];

export default function App() {
  return (
    <div className="w-[1280px] h-[968px] flex flex-col overflow-hidden bg-[#d4d0c8] font-['Liberation_Sans',sans-serif] text-black">
      {/* title bar */}
      <div className="h-[23px] shrink-0 flex items-center pl-[3px] pr-[3px] bg-linear-to-r from-[#0a246a] to-[#a6caf0] text-white">
        <svg width="18" height="19" viewBox="0 0 18 19" className="shrink-0">
          <rect width="18" height="19" fill="#000" />
          <path d="M3 1l5 8-5 9h3l3-6 3 6h4l-5-9 4-8h-3l-3 6-3-6z" fill="#e8d8b0" />
        </svg>
        <div className="ml-[3px] flex-1 text-[15.2px] leading-none">XTick Professional - RTSI</div>
        <WinBtn g="min" w="w-[21px]" h="h-[19px]" />
        <WinBtn g="rest" w="w-[21px]" h="h-[19px]" />
        <div className="w-[2px]" />
        <WinBtn g="close" w="w-[21px]" h="h-[19px]" />
      </div>
      {/* menu */}
      <div className="h-[29px] shrink-0 flex items-center pl-[2px] pt-[1px] border-t border-white border-b-2 border-b-[#a8a49c] text-[14px]">
        <Grip />
        <div className="ml-[11px] flex text-[#101010]">
          {[["С", "траница", "mr-[15px]"], ["В", "ид", "mr-[15px]"], ["Г", "рафик", "mr-[15px]"], ["К", "отировки", "mr-[20px]"], ["С", "истема", "mr-[15px]"], ["И", "нструменты", "mr-[19px]"], ["О", "кно", "mr-[16px]"], ["П", "омощь", ""]].map(([a, b, m], i) => (
            <div key={i} className={m}>
              <span className="underline">{a}</span>
              {b}
            </div>
          ))}
        </div>
      </div>
      {/* toolbar 1 */}
      <div className="h-[28px] shrink-0 flex items-center pt-[1px] border-b-2 border-b-[#f4f2ee]">
        <div className="w-[480px] flex items-center pl-[2px] border-r-2 border-white h-full">
          <Grip />
          <div className="w-[3.5px]" />
          {icons1.slice(0, 3).map((x, i) => <Ic key={i}>{x}</Ic>)}
          <Sep />
          <Ic>{icons1[3]}</Ic>
          <Sep />
          <Ic>{icons1[4]}</Ic>
          <Sep />
          {icons1.slice(5, 11).map((x, i) => <Ic key={i}>{x}</Ic>)}
          <Sep />
          <Ic>{icons1[11]}</Ic>
          <Sep />
          {icons1.slice(12, 14).map((x, i) => <Ic key={i}>{x}</Ic>)}
          <More />
        </div>
        <div className="ml-[2px] flex items-center">
          <Grip />
          <Ic><Doc /></Ic>
          <Sep />
          <Ic><Doc /><Disk /><path d="M17 5H4M8 2L4 5l4 3" stroke="#e00000" strokeWidth="1.8" /></Ic>
          <Ic><Doc /><Disk /><path d="M2 5h13M11 2l4 3-4 3" stroke="#e00000" strokeWidth="1.8" /></Ic>
          <Sep />
          <Ic><Doc /><path d="M6 6l6 7M12 6l-6 7" stroke="#e00000" strokeWidth="2.2" /></Ic>
        </div>
      </div>
      {/* toolbar 2 */}
      <div className="h-[29px] shrink-0 flex items-center pt-[2px] text-[11px] tracking-[-.5px]">
        <div className="w-[286px] flex items-center pl-[2px] border-r-2 border-[#a8a49c] h-full">
          <Grip />
          <div className="w-[3.5px]" />
          {icons2.map((x, i) => <Ic key={i}>{x}</Ic>)}
        </div>
        <div className="w-[353px] flex items-center pl-[2px] border-r-2 border-[#a8a49c] h-full">
          <Grip />
          <div className="w-[3.5px]" />
          <Ic><Axes /><path d="M3 14l5-5 3-6 5 11z" fill="#20c020" /><path d="M11 3l2 12M14 8v7" stroke="#e00000" strokeWidth="1.5" /><path d="M3 10l13-3" stroke="#a09000" /></Ic>
          <Sep />
          <Ic><path d="M9 1v15M1 8.5h16" stroke="#000" /></Ic>
          <Sep />
          <Ic><path d="M5 1v13l3-3 3 5 2-1-3-5h4z" fill="#fff" stroke="#000" /></Ic>
          {lineTools.map((x, i) => <Ic key={i}>{x}</Ic>)}
          <More />
        </div>
        <div className="flex items-center pl-[4px]">
          {["1m", "3m", "5m", "10m", "15m", "30m", "60m", "240"].map((t) => <Tx key={t} t={t} />)}
          <Sep />
          {["D", "W", "M"].map((t) => <Tx key={t} t={t} />)}
          <Sep />
          <Ic><circle cx="9" cy="8.5" r="5" stroke="#000" strokeWidth="2" fill="#fff" /><path d="M9 5.5v3h3" stroke="#000" strokeWidth="1.4" /></Ic>
        </div>
      </div>
      {/* MDI */}
      <div className="relative h-[810px] shrink-0 bg-[#808080] overflow-hidden border-t border-[#404040]">
        <Weekly />
        <Daily />
        <Hourly />
        <Tile cls="left-[3px]" />
        <Tile cls="left-[163px]" />
        <Tile cls="left-[323px]" />
      </div>
      {/* tabs */}
      <div className="h-[4px] shrink-0 bg-[#f4f2ea]" />
      <div className="h-[18px] shrink-0 bg-[#f4f2ea] border-t border-black flex items-center text-[13.5px] text-[#505050] pl-[11px] relative leading-none">
        <span>Blue Chip 60 min.</span>
        <span className="w-px h-[12px] bg-[#808080] ml-[7px] mr-[7px]" />
        <span>Blue Chip Daly</span>
        <span className="w-[48px] ml-[7px] h-[18px] mt-[-1px] border-x border-b border-black bg-[#f4f2ea] font-bold text-black text-center leading-[17px]"><span className="underline">RTSI</span></span>
        <span className="ml-[7px] tracking-[-.4px]">MICEX</span>
        <span className="w-px h-[12px] bg-[#808080] ml-[6px] mr-[7px]" />
        <span className="tracking-[-.3px]">URSI</span>
        <span className="w-px h-[12px] bg-[#808080] ml-[6px] mr-[7px]" />
        <span className="tracking-[-.3px]">CHMF</span>
        <span className="w-px h-[12px] bg-[#808080] ml-[6px]" />
        <svg width="24" height="11" viewBox="0 0 24 11" className="absolute right-[6px] top-[3px]" fill="none" stroke="#606060">
          <path d="M5 1L1 5.5 5 10zM18 1l4 4.5-4 4.5z" />
        </svg>
      </div>
      {/* status */}
      <div className="h-[24px] shrink-0 bg-[#d4d0c8] flex items-stretch pt-[2px] gap-[2px] text-[14px] text-[#202020] whitespace-nowrap leading-[20px]">
        <div className="w-[462px] pl-[2px] border border-t-[#808080] border-l-[#808080] border-r-white border-b-white">Ready</div>
        <div className="w-[240px] pl-[2px] border border-t-[#808080] border-l-[#808080] border-r-white border-b-white">Sent: 46 Kb/Recv: 1845 Kb</div>
        <div className="w-[170px] pl-[2px] border border-t-[#808080] border-l-[#808080] border-r-white border-b-white">Connected/0 ms</div>
        <div className="w-[22px] border border-t-[#808080] border-l-[#808080] border-r-white border-b-white flex items-center justify-center">
          <div className="w-[18px] h-[18px] bg-black flex items-center justify-center"><div className="w-[12px] h-[13px] rounded-full bg-[#008000]" /></div>
        </div>
        <div className="w-[151px] pl-[2px] border border-t-[#808080] border-l-[#808080] border-r-white border-b-white">27/06/2006 14:49 GMT</div>
        <div className="w-[180px] pl-[2px] border border-t-[#808080] border-l-[#808080] border-r-white border-b-white tracking-[.1px]">27/06/2006 18:49:48 Local</div>
        <div className="w-[20px] flex items-center justify-center">
          <svg width="18" height="19" viewBox="0 0 18 19"><rect width="18" height="19" fill="#000" /><path d="M9 2l7 14H2z" fill="#606060" stroke="#a0a0a0" /><path d="M9 7v5M9 13.5v1.5" stroke="#000" strokeWidth="1.6" /></svg>
        </div>
      </div>
      <div className="h-[3px] shrink-0 bg-[#f4f2ea] border-t border-white" />
    </div>
  );
}
